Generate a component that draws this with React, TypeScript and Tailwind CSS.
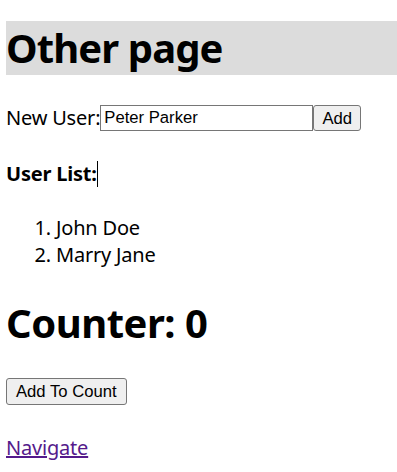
import { useState } from "react";

const bodyFont = { fontFamily: '"Noto Sans", "Noto Sans CJK KR", sans-serif' };

export default function App() {
  const [name, setName] = useState("Peter Parker");
  const [users, setUsers] = useState(["John Doe", "Marry Jane"]);
  const [count, setCount] = useState(0);

  return (
    <div className="pl-[6px] text-[20px] leading-[26.6px] tracking-[-0.2px] text-black" style={bodyFont}>
      <h1 className="mt-[21px] h-[54px] bg-[#dcdcdc] text-[40px] font-bold leading-[54px] tracking-[-0.9px]">
        Other page
      </h1>

      <div className="mt-[30px] flex h-[26px] items-center">
        <span>New User:</span>
        <input
          className="h-[26px] w-[213px] border border-[#767676] px-[3px] font-['Liberation_Sans',Arial,sans-serif] text-[16.67px] tracking-normal outline-none"
          value={name}
          onChange={(e) => setName(e.target.value)}
        />
        <button
          className="h-[26px] w-[48px] rounded-[3px] border border-[#767676] bg-[#efefef] font-['Liberation_Sans',Arial,sans-serif] text-[16.67px] tracking-normal"
          onClick={() => setUsers([...users, name])}
        >
          Add
        </button>
      </div>

      <div className="mt-[30px] flex h-[26px] items-center font-bold">
        <span>User List:</span>
        <span className="inline-block h-[26px] w-px bg-black" />
      </div>

      <ol className="mt-[28px] list-decimal pl-[50px]">
        {users.map((u) => (
          <li key={u}>{u}</li>
        ))}
      </ol>

      <h1 className="mt-[28px] text-[40px] font-bold leading-[54px] tracking-[-0.5px]">Counter: {count}</h1>

      <button
        className="mt-[28px] h-[27px] rounded-[3px] border border-[#767676] bg-[#efefef] px-[9px] font-['Liberation_Sans',Arial,sans-serif] text-[16.67px] tracking-normal"
        onClick={() => setCount(count + 1)}
      >
        Add To Count
      </button>

      <div className="mt-[30px]">
        <a href="#" className="text-[#551a8b] underline">
          Navigate
        </a>
      </div>
    </div>
  );
}
